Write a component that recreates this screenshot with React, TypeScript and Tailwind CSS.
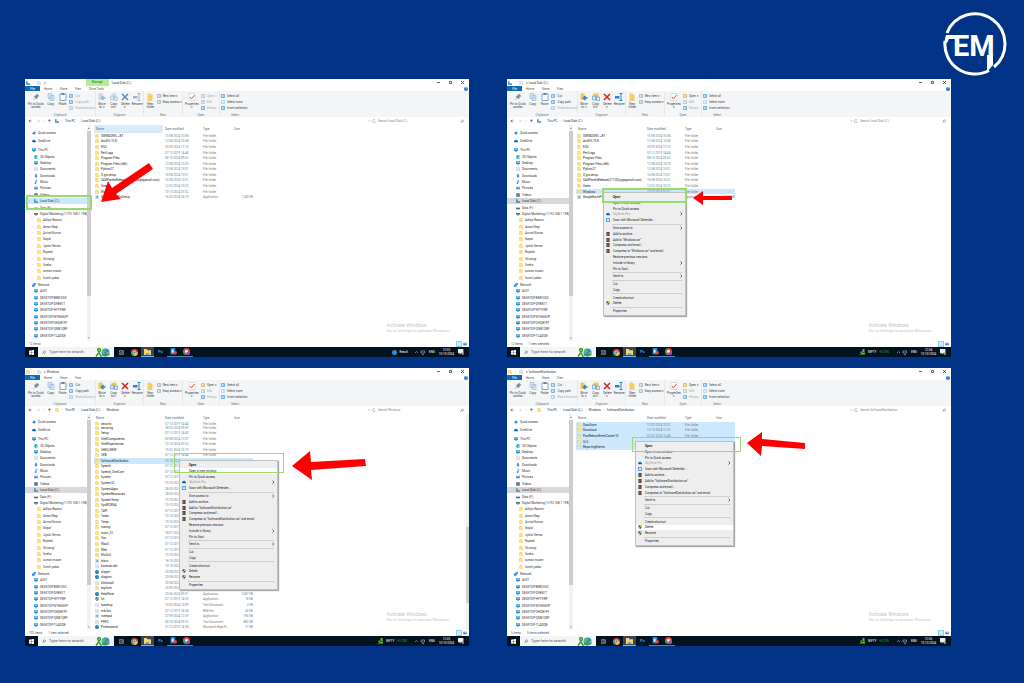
import React from 'react'
import clsx from 'clsx'

type IconKind =
  | 'folder'
  | 'disk'
  | 'disk2'
  | 'pc'
  | 'star'
  | 'cloud'
  | 'cube'
  | 'doc'
  | 'down'
  | 'music'
  | 'picture'
  | 'video'
  | 'netdrive'
  | 'network'
  | 'edge'
  | 'exe'
  | 'rar'
  | 'shield'
  | 'defender'

function Icon({ kind, className = 'size-1' }: { kind: IconKind; className?: string }) {
  return (
    <svg viewBox="0 0 12 12" className={clsx('shrink-0', className)} aria-hidden="true">
      {kind === 'folder' && (
        <>
          <path d="M1 0h6l1 2h3v10H1z" fill="#f7cf5e" />
          <path d="M3 3h8v9H3z" fill="#fde08a" />
        </>
      )}
      {kind === 'disk' && (
        <>
          <path d="M0 7h12v4H0z" fill="#5d6b75" />
          <path d="M0 1h5v5H0z" fill="#1aa0e8" />
          <path d="M8 8h3v2H8z" fill="#4fd3c4" />
        </>
      )}
      {kind === 'disk2' && <path d="M0 5h12v5H0z" fill="#5d6b75" />}
      {kind === 'pc' && (
        <>
          <path d="M0 1h12v8H0z" fill="#2196e3" />
          <path d="M1 2h10v4H1z" fill="#5fc4f5" />
          <path d="M3 10h6v1H3z" fill="#4b6b85" />
        </>
      )}
      {kind === 'star' && <path d="M7 0l1 4 4 1-4 3-1 4-3-3-4-1 3-3z" fill="#1683d8" />}
      {kind === 'cloud' && <path d="M3 10a3 3 0 0 1 0-6 4 4 0 0 1 7 1 2.500 2.500 0 0 1 0 5z" fill="#0a66c9" />}
      {kind === 'cube' && (
        <>
          <path d="M1 2l5-2 5 2v8l-5 2-5-2z" fill="#17a5c9" />
          <path d="M6 5l5-3v8l-5 2z" fill="#7fe0ef" />
        </>
      )}
      {kind === 'doc' && (
        <>
          <path d="M2 .5h6l2.500 2.500v8.500H2z" fill="#fff" stroke="#8896a3" />
          <path d="M4 4h4M4 6h5M4 8h5" stroke="#9fb4c8" />
        </>
      )}
      {kind === 'down' && <path d="M4 0h4v5h3l-5 6-5-6h3z" fill="#1683d8" />}
      {kind === 'music' && <path d="M5 0h2c0 2 4 2 3 6-1-2-2-2-3-2v5a2.500 2.500 0 1 1-2-2z" fill="#1683d8" />}
      {kind === 'picture' && (
        <>
          <path d="M0 2h12v8H0z" fill="#7ab8de" />
          <path d="M1 9l3-4 3 3 2-2 2 3z" fill="#2f6f96" />
        </>
      )}
      {kind === 'video' && (
        <>
          <path d="M1 1h10v10H1z" fill="#4a4f5c" />
          <path d="M4 2h4v8H4z" fill="#8d94a5" />
        </>
      )}
      {kind === 'netdrive' && (
        <>
          <path d="M0 3h12v5H0z" fill="#5d6b75" />
          <path d="M4 5h4v6H4z" fill="#2fa84f" />
        </>
      )}
      {kind === 'network' && (
        <>
          <path d="M4 0h8v6H4z" fill="#38a8ec" />
          <path d="M0 5h8v6H0z" fill="#1683d8" />
        </>
      )}
      {kind === 'edge' && (
        <>
          <circle cx="6" cy="6" r="6" fill="#1278c8" />
          <path d="M1 4a6 6 0 0 1 11 3H6a3 3 0 0 0-5-3z" fill="#35c0a8" />
        </>
      )}
      {kind === 'exe' && (
        <>
          <path d="M.5 1.500h11v9H.5z" fill="#fff" stroke="#7a93a8" />
          <path d="M4 4h5v4H4z" fill="#2a7fd0" />
        </>
      )}
      {kind === 'rar' && (
        <>
          <path d="M1 0h10v4H1z" fill="#9b2d5a" />
          <path d="M1 4h10v4H1z" fill="#34549c" />
          <path d="M1 8h10v4H1z" fill="#39733c" />
          <path d="M5 0h3v12H5z" fill="#6b3a2a" />
        </>
      )}
      {kind === 'shield' && (
        <>
          <path d="M6 0l5 2c0 5-1 8-5 10C2 10 1 7 1 2z" fill="#1e5fae" />
          <path d="M6 0l5 2c0 2 0 3-.5 4H6zM6 6v6C3.500 11 2 9 1.500 6z" fill="#e8c33a" />
        </>
      )}
      {kind === 'defender' && (
        <>
          <path d="M0 0h12v12H0z" fill="#4fa8ea" />
          <path d="M3 4h6v5H3z" fill="#e6f4ff" />
        </>
      )}
    </svg>
  )
}

interface FileRow {
  name: string
  date: string
  type?: string
  size?: string
  icon?: IconKind
  selected?: boolean
}

interface MenuEntry {
  label: string
  icon?: IconKind
  arrow?: boolean
  bold?: boolean
  muted?: boolean
  lit?: boolean
}

interface WindowProps {
  title: string
  path: string[]
  search: string
  files: FileRow[]
  listClass: string
  status: string[]
  ticker: string
  clock: string
  driveTools?: boolean
  driveIcon?: boolean
  scrolls?: boolean
  children?: React.ReactNode
}

const places: [string, IconKind, number][] = [
  ['This PC', 'pc', 0],
  ['3D Objects', 'cube', 1],
  ['Desktop', 'pc', 1],
  ['Documents', 'doc', 1],
  ['Downloads', 'down', 1],
  ['Music', 'music', 1],
  ['Pictures', 'picture', 1],
  ['Videos', 'video', 1],
  ['Local Disk (C:)', 'disk', 1],
  ['Data (F:)', 'disk2', 1],
  ['Digital Marketing (\\\\192.168.1.198)', 'netdrive', 1],
  ['Aditya Rawani', 'folder', 2],
  ['Aman Negi', 'folder', 2],
  ['Arvind Kumar', 'folder', 2],
  ['Gopal', 'folder', 2],
  ['Jyotsi Verma', 'folder', 2],
  ['Rupesh', 'folder', 2],
  ['Shivangi', 'folder', 2],
  ['Sneha', 'folder', 2],
  ['suman maam', 'folder', 2],
  ['Sumit yadav', 'folder', 2],
]

const network: [string, IconKind, number][] = [
  ['Network', 'network', 0],
  ['ASIIT', 'pc', 1],
  ['DESKTOP-BMK3ISO', 'pc', 1],
  ['DESKTOP-D9BN1T', 'pc', 1],
  ['DESKTOP-HYTYRIF', 'pc', 1],
  ['DESKTOP-NTHGGUP', 'pc', 1],
  ['DESKTOP-OHQB1FY', 'pc', 1],
  ['DESKTOP-QM81QRY', 'pc', 1],
  ['DESKTOP-TLADIQE', 'pc', 1],
]

function PlaceItem({ label, icon, level, active, chevrons }: {
  label: string
  icon: IconKind
  level: number
  active?: boolean
  chevrons?: boolean
}) {
  return (
    <button
      className={clsx(
        'flex min-h-0 w-full flex-1 items-center gap-[2px] overflow-hidden whitespace-nowrap text-left',
        level === 0 && 'pl-[2px]',
        level === 1 && 'pl-[4px]',
        level === 2 && 'pl-[7px]',
        active && (chevrons ? 'bg-[#cce8ff]' : 'bg-[#d9d9d9]'),
      )}
    >
      <span className="w-[3px] shrink-0 text-[#777]">{chevrons ? (level === 0 ? '⌄' : '›') : ''}</span>
      <Icon kind={icon} />
      <span>{label}</span>
    </button>
  )
}

function Sidebar({ chevrons }: { chevrons?: boolean }) {
  return (
    <nav className="flex w-[62px] shrink-0 flex-col pt-[5px]">
      <div className="flex h-[6px]">
        <PlaceItem label="Quick access" icon="star" level={0} chevrons={chevrons} />
      </div>
      <div className="mt-[2px] flex h-[6px]">
        <PlaceItem label="OneDrive" icon="cloud" level={0} chevrons={chevrons} />
      </div>
      <div className="mt-[3px] flex h-[134px] flex-col">
        {places.map(([label, icon, level]) => (
          <PlaceItem
            key={label}
            label={label}
            icon={icon}
            level={level}
            active={label === 'Local Disk (C:)'}
            chevrons={chevrons}
          />
        ))}
      </div>
      <div className="mt-px flex h-[57px] flex-col">
        {network.map(([label, icon, level]) => (
          <PlaceItem key={label} label={label} icon={icon} level={level} chevrons={chevrons} />
        ))}
      </div>
    </nav>
  )
}

function BigTool({ label, className, children }: { label: string; className?: string; children: React.ReactNode }) {
  return (
    <button className={clsx('flex w-[12px] flex-col items-center gap-[2px] text-center text-[#444]', className)}>
      <svg viewBox="0 0 16 16" className="size-[8px]" aria-hidden="true">
        {children}
      </svg>
      <span className="whitespace-pre-line leading-[3px]">{label}</span>
    </button>
  )
}

function SmallTool({ label, color, off }: { label: string; color: string; off?: boolean }) {
  return (
    <button className={clsx('flex h-[4px] items-center gap-[2px] whitespace-nowrap', off ? 'text-[#aaa]' : 'text-[#444]')}>
      <svg viewBox="0 0 8 8" className="size-[4px] shrink-0" aria-hidden="true">
        <path d="M1 1h6v6H1z" fill="#fff" stroke={color} strokeWidth="1.500" />
        <path d="M3 4h3" stroke={color} strokeWidth="2" />
      </svg>
      <span>{label}</span>
    </button>
  )
}

function Group({ label, className, children }: { label: string; className: string; children: React.ReactNode }) {
  return (
    <div className={clsx('flex shrink-0 flex-col justify-between border-r border-[#e6e8ea]', className)}>
      <div className="flex items-start pt-[2px]">{children}</div>
      <div className="text-center text-[#777]">{label}</div>
    </div>
  )
}

function Ribbon({ off }: { off?: boolean }) {
  const folder = off ? '#cfd6de' : '#f5c84b'
  const blue = off ? '#9db7cf' : '#2a84d2'
  return (
    <div className="flex h-[26px] bg-[#f3f5f7]">
      <Group label="Clipboard" className="w-[71px]">
        <BigTool label={'Pin to Quick\naccess'} className="ml-[2px] w-[18px]">
          <path d="M10 2l4 4-2 1-2 3-1 2-5-5 2-1 3-2zM6 10l-4 4" fill="#7c8a98" stroke="#7c8a98" />
        </BigTool>
        <BigTool label="Copy">
          <path d="M2 1h8v10H2zM6 5h8v10H6z" fill="#d8e8f6" stroke="#7fa8cf" />
        </BigTool>
        <BigTool label="Paste">
          <path d="M2 2h12v13H2z" fill="#fff" stroke="#7fa8cf" strokeWidth="2" />
          <path d="M5 0h6v4H5z" fill="#6d8299" />
        </BigTool>
        <div className="flex flex-col gap-[2px] pl-px pt-px">
          <SmallTool label="Cut" color="#5b9bd5" off={off} />
          <SmallTool label="Copy path" color="#5b9bd5" off={off} />
          <SmallTool label="Paste shortcut" color="#a9bdd0" off />
        </div>
      </Group>
      <Group label="Organize" className="w-[48px]">
        <BigTool label={'Move\nto ▾'}>
          <path d="M1 1h8v13H1z" fill={folder} />
          <path d="M15 10H8m3-4l-4 4 4 4" fill="none" stroke={blue} strokeWidth="3" />
        </BigTool>
        <BigTool label={'Copy\nto ▾'}>
          <path d="M3 1h10v13H3z" fill={folder} />
          <path d="M1 6h6v8H1zM9 8h6v7H9z" fill="#d8e8f6" stroke={blue} />
        </BigTool>
        <BigTool label={'Delete\n▾'}>
          <path d="M2 2l12 12M14 2L2 14" stroke={off ? '#5f88b5' : '#d92020'} strokeWidth="3" />
        </BigTool>
        <BigTool label="Rename">
          <path d="M0 6h9v5H0z" fill={blue} />
          <path d="M12 1v14M9 1h6M9 15h6" stroke={blue} strokeWidth="2" />
        </BigTool>
      </Group>
      <Group label="New" className="w-[39px]">
        <BigTool label={'New\nfolder'} className="ml-px">
          <path d="M3 1h6l1 2h3v13H3z" fill="#f5cf62" />
        </BigTool>
        <div className="flex flex-col gap-[2px] pl-px pt-px">
          <SmallTool label="New item ▾" color="#9aa9b8" />
          <SmallTool label="Easy access ▾" color="#9aa9b8" />
        </div>
      </Group>
      <Group label="Open" className="w-[37px]">
        <BigTool label={'Properties\n▾'} className="w-[18px]">
          <path d="M2 1h12v14H2z" fill="#fff" stroke="#b8c2cc" />
          <path d="M4 8l3 4 6-8" fill="none" stroke="#e0592a" strokeWidth="2" />
        </BigTool>
        <div className="flex flex-col gap-[2px] pt-px">
          <SmallTool label="Open ▾" color={off ? '#a9bdd0' : '#e3a92b'} off={off} />
          <SmallTool label="Edit" color="#a9bdd0" off />
          <SmallTool label="History" color="#5b9bd5" off />
        </div>
      </Group>
      <Group label="Select" className="w-[30px] border-r-0">
        <div className="flex flex-col gap-[2px] pl-px pt-px">
          <SmallTool label="Select all" color="#3c9be0" />
          <SmallTool label="Select none" color="#a9cbe8" />
          <SmallTool label="Invert selection" color="#3c9be0" />
        </div>
      </Group>
    </div>
  )
}

function Taskbar({ ticker, clock }: { ticker: string; clock: string }) {
  return (
    <footer className="flex h-[10px] items-center bg-[#03121f] text-white">
      <button aria-label="Start" className="flex w-[13px] justify-center">
        <svg viewBox="0 0 8 8" className="size-[5px]">
          <path d="M0 1l3.500-.5v3.300H0zM4 .4L8 0v3.800H4zM0 4.300h3.500v3.300L0 7zM4 4.300h4V8l-4-.5z" fill="#fff" />
        </svg>
      </button>
      <label className="flex h-full w-[76px] items-center bg-[#f4f5f5] pl-[4px]">
        <svg viewBox="0 0 8 8" className="size-[4px] shrink-0">
          <path d="M3 5a2 2 0 1 1 4-2 2 2 0 0 1-4 2zM3 5L1 8" fill="none" stroke="#444" />
        </svg>
        <input
          aria-label="Type here to search"
          placeholder="Type here to search"
          className="ml-[3px] w-[46px] text-[4px] leading-[6px] placeholder:text-[#555]"
        />
        <svg viewBox="0 0 30 18" className="h-[9px] w-[15px] shrink-0">
          <path d="M2 17L10 6c2-3-1-6-3-5s-2 4 0 6l5 10" fill="none" stroke="#3a9a2e" strokeWidth="3" />
          <circle cx="21" cy="9" r="8" fill="#2f8fc8" />
          <path d="M16 3c5-1 7 2 4 4s0 6-3 5-4-7-1-9zM23 9l5-2v6l-4 2z" fill="#6cc04a" />
          <path d="M11 17c5-3 12-2 18-4" fill="none" stroke="#3a9a2e" strokeWidth="2" />
        </svg>
      </label>
      <div className="flex h-full items-center">
        <button aria-label="Task view" className="flex w-[14px] justify-center">
          <svg viewBox="0 0 10 10" className="size-[5px]">
            <path d="M1 1h6v3H1zM1 6h6v3H1zM9 1v8" fill="none" stroke="#c9d2d8" />
          </svg>
        </button>
        <button aria-label="Chrome" className="flex w-[13px] justify-center">
          <svg viewBox="0 0 12 12" className="size-[7px]">
            <circle cx="6" cy="6" r="6" fill="#e94435" />
            <path d="M6 6L1 3a6 6 0 0 0 4 9z" fill="#34a853" />
            <path d="M6 6h6a6 6 0 0 1-7 6z" fill="#fbbc05" />
            <circle cx="6" cy="6" r="2.500" fill="#4285f4" stroke="#fff" />
          </svg>
        </button>
        <button aria-label="File Explorer" className="flex h-full w-[13px] items-center justify-center border-b border-[#76b9ed] bg-[#3b4650]">
          <svg viewBox="0 0 12 10" className="h-[6px] w-[7px]">
            <path d="M0 0h5l1 2h6v8H0z" fill="#f9d667" />
            <path d="M3 7h6v3H3z" fill="#4fa5df" />
          </svg>
        </button>
        <button aria-label="Photoshop" className="w-[13px] text-center text-[4px] font-bold text-[#31a8ff]">
          Ps
        </button>
        <button aria-label="Store" className="flex h-full w-[13px] items-center justify-center border-b border-[#4b86b5]">
          <svg viewBox="0 0 12 12" className="size-[7px]">
            <path d="M1 0h8v11H1z" fill="#2389dd" />
            <circle cx="9" cy="8" r="3" fill="#dd4a43" />
            <path d="M3 3h3v5H3z" fill="#fff" />
          </svg>
        </button>
        <button aria-label="Chrome profile" className="flex h-full w-[13px] items-center justify-center border-b border-[#4b86b5]">
          <svg viewBox="0 0 12 12" className="size-[7px]">
            <circle cx="6" cy="6" r="6" fill="#e94435" />
            <path d="M6 6L1 3a6 6 0 0 0 4 9z" fill="#34a853" />
            <circle cx="6" cy="6" r="2.500" fill="#fff" />
            <circle cx="9" cy="9" r="3" fill="#b044c8" />
          </svg>
        </button>
      </div>
      <div className="ml-auto flex items-center gap-[3px] pr-[5px]">
        {ticker === 'Result' ? (
          <span className="flex items-center gap-[3px] pr-[3px]">
            <span className="size-[5px] rounded-full bg-[#2a8fd6]" />
            Result
          </span>
        ) : (
          <span className="flex items-center gap-[3px]">
            <svg viewBox="0 0 12 12" className="size-[6px]">
              <path d="M0 11h12V7H8zM7 0h4v6H7zM3 5h3v3H3z" fill="#5cc22e" />
            </svg>
            NIFTY
            <span className="pr-[4px] text-[#1faa3c]">{ticker}</span>
          </span>
        )}
        <svg viewBox="0 0 24 10" className="h-[5px] w-[12px]">
          <path d="M2 6l3-3 3 3M14 2h7v4h-7zM16 9h4" fill="none" stroke="#d8dde0" />
        </svg>
        <span>ENG</span>
        <span className="px-px text-center leading-[4px]">
          {clock}
          <br />
          10-10-2024
        </span>
        <svg viewBox="0 0 10 10" className="size-[6px]">
          <path d="M0 0h9v7H5L3 9V7H0z" fill="#e8ecee" />
          <circle cx="8" cy="8" r="2" fill="#8c9499" />
        </svg>
      </div>
    </footer>
  )
}

function ContextMenu({ groups, className }: { groups: MenuEntry[][]; className: string }) {
  return (
    <div
      role="menu"
      className={clsx(
        'absolute flex flex-col border border-[#c0c0c0] bg-[#eeeeee] py-px text-[#1c1c1c] shadow-[1px_1px_1px_#0005]',
        className,
      )}
    >
      {groups.map((group, i) => (
        <React.Fragment key={i}>
          {i > 0 && (
            <div className="flex min-h-0 flex-[2] items-center pl-[8px] pr-[3px]">
              <div className="h-px w-full bg-[#cfcfcf]" />
            </div>
          )}
          {group.map((entry) => (
            <button
              key={entry.label}
              role="menuitem"
              className={clsx(
                'flex min-h-0 flex-[6] items-center whitespace-nowrap px-[2px]',
                entry.bold && 'font-bold',
                entry.muted && 'text-[#999]',
                entry.lit && 'bg-white',
              )}
            >
              <span className="flex w-[7px] shrink-0">{entry.icon && <Icon kind={entry.icon} />}</span>
              <span>{entry.label}</span>
              {entry.arrow && (
                <svg viewBox="0 0 6 8" className="ml-auto h-[4px] w-[3px]" aria-hidden="true">
                  <path d="M1 1l3 3-3 3" fill="none" stroke="#444" strokeWidth="1.500" />
                </svg>
              )}
            </button>
          ))}
        </React.Fragment>
      ))}
    </div>
  )
}

function Highlight({ className }: { className: string }) {
  return <div className={clsx('absolute border-[#98da6c]', className)} />
}

function Arrow({ points }: { points: string }) {
  return (
    <svg viewBox="0 0 444 278" className="pointer-events-none absolute left-0 top-0 h-[278px] w-[444px]" aria-hidden="true">
      <polygon points={points} fill="#fe0000" />
    </svg>
  )
}

function FileTable({ files, listClass, driveTools }: { files: FileRow[]; listClass: string; driveTools?: boolean }) {
  return (
    <table className="block w-[159px]">
      <thead className="block">
        <tr className="grid h-[8px] grid-cols-[71px_38px_31px_19px] items-center text-left text-[#5a6b80]">
          <th className={clsx('self-stretch pl-[2px] pt-[2px] font-normal', driveTools && 'mr-[2px] bg-[#d9ebf9]')}>Name</th>
          <th className="font-normal">Date modified</th>
          <th className="font-normal">Type</th>
          <th className="font-normal">Size</th>
        </tr>
      </thead>
      <tbody className={clsx('flex flex-col', listClass)}>
        {files.map((file) => (
          <tr
            key={file.name}
            className={clsx(
              'grid min-h-0 grow basis-0 grid-cols-[71px_38px_31px_19px] items-center overflow-hidden whitespace-nowrap text-[#7d7d7d]',
              file.selected && 'bg-[#cce8ff]',
            )}
          >
            <td className="flex items-center gap-[2px] pl-px text-[#222]">
              <Icon kind={file.icon ?? 'folder'} />
              {file.name}
            </td>
            <td>{file.date}</td>
            <td>{file.type}</td>
            <td className="text-right">{file.size}</td>
          </tr>
        ))}
      </tbody>
    </table>
  )
}

function ExplorerWindow(props: WindowProps) {
  const { title, path, search, files, listClass, status, ticker, clock, driveTools, driveIcon, scrolls, children } = props
  return (
    <section className="relative flex flex-col bg-white text-[3px] leading-[4px] text-[#333]">
      <header className="flex h-[7px] items-center">
        <div className="flex items-center gap-[3px] pl-px">
          <Icon kind={driveIcon ? 'disk' : 'folder'} />
          <span className="text-[#aaa]">|</span>
          <Icon kind="doc" />
          <span>▾</span>
        </div>
        {driveTools && <div className="ml-[40px] w-[23px] self-stretch bg-[#b5ec94] pt-px text-center text-[#3d6b2c]">Manage</div>}
        <div className={driveTools ? 'ml-[3px]' : 'ml-px'}>{title}</div>
        <div className="ml-auto flex gap-[9px] pr-[5px]">
          <button aria-label="Minimize" className="flex">
            <svg viewBox="0 0 6 6" className="size-[3px]"><path d="M0 3h6" stroke="#333" strokeWidth="1.500" /></svg>
          </button>
          <button aria-label="Restore" className="flex">
            <svg viewBox="0 0 6 6" className="size-[3px]"><path d="M1 1h4v4H1z" fill="none" stroke="#333" strokeWidth="1.500" /></svg>
          </button>
          <button aria-label="Close" className="flex">
            <svg viewBox="0 0 6 6" className="size-[3px]"><path d="M0 0l6 6M6 0L0 6" stroke="#333" strokeWidth="1.500" /></svg>
          </button>
        </div>
      </header>
      <div className="flex h-[5px] items-center text-center text-[#555]">
        <button className="h-full w-[15px] bg-[#1268b8] text-white">File</button>
        <button className="w-[16px]">Home</button>
        <button className="w-[15px]">Share</button>
        <button className="w-[14px]">View</button>
        {driveTools && <button className="w-[23px]">Drive Tools</button>}
        <button aria-label="Help" className="ml-auto mr-px size-[4px] rounded-full bg-[#1a78cf] text-white">
          ?
        </button>
      </div>
      <Ribbon off={driveTools} />
      <div className="flex h-[8px] items-center whitespace-nowrap">
        <svg viewBox="0 0 56 8" className="ml-[3px] h-[4px] w-[25px] shrink-0" aria-hidden="true">
          <path d="M8 4H2m3-3L2 4l3 3M48 7V1m-3 3l3-3 3 3" fill="none" stroke="#555" strokeWidth="1.500" />
          <path d="M20 4h6m-3-3l3 3-3 3M34 3l2 2 2-2" fill="none" stroke="#bbb" />
        </svg>
        <Icon kind={driveIcon ? 'disk' : 'folder'} className="ml-[2px] size-1" />
        <ol className="flex">
          {path.map((part) => (
            <li key={part} className="flex">
              <span className="w-[6px] text-center text-[#888]">›</span>
              {part}
            </li>
          ))}
        </ol>
        <div className="ml-auto flex w-[101px] items-center">
          <svg viewBox="0 0 16 8" className="h-[4px] w-[8px] shrink-0" aria-hidden="true">
            <path d="M1 3l2 2 2-2M14 2a3 3 0 1 0 1 3" fill="none" stroke="#777" />
          </svg>
          <input aria-label={search} placeholder={search} className="ml-[2px] min-w-0 flex-1 text-[3px] leading-[4px] placeholder:text-[#888]" />
          <svg viewBox="0 0 8 8" className="mr-[5px] size-[4px] shrink-0" aria-hidden="true">
            <path d="M3 5a2 2 0 1 1 4-2 2 2 0 0 1-4 2zM3 5L1 8" fill="none" stroke="#666" />
          </svg>
        </div>
      </div>
      <div className="flex h-[216px]">
        <Sidebar chevrons={driveTools} />
        <div className="flex w-[4px] shrink-0 flex-col items-center bg-[#f2f2f2] text-[#666]">
          <span className="h-[6px] leading-[6px]">▴</span>
          <div className="h-[165px] w-full bg-[#cdcdcd]" />
          <span className="mt-auto h-[5px]">▾</span>
        </div>
        <div className="flex min-w-0 flex-1 pl-[3px]">
          <FileTable files={files} listClass={listClass} driveTools={driveTools} />
          <div className="ml-auto flex">
            <div className={clsx('self-end whitespace-nowrap pb-[8px] text-[#c4c4c4]', scrolls ? 'pr-[16px]' : 'pr-[19px]')}>
              <div className="text-[5px] leading-[6px]">Activate Windows</div>
              <div className="text-[4px] leading-[5px]">Go to Settings to activate Windows.</div>
            </div>
            {scrolls && (
              <div className="flex w-[3px] flex-col bg-[#f0f0f0] pt-[113px]">
                <div className="h-[76px] bg-[#cdcdcd]" />
              </div>
            )}
          </div>
        </div>
      </div>
      <div className="flex h-[6px] items-center gap-[6px] pl-[4px] text-[#3d5570]">
        {status.map((text) => (
          <span key={text}>{text}</span>
        ))}
        <div className="ml-auto flex items-center gap-px pr-[2px]">
          <span className="size-[6px] border border-[#8fd0ee] bg-[#cdeaf8]" />
          <Icon kind="picture" className="size-[4px]" />
        </div>
      </div>
      <Taskbar ticker={ticker} clock={clock} />
      {children}
    </section>
  )
}

const folder = (name: string, date: string, selected?: boolean): FileRow => ({ name, date, type: 'File folder', selected })

const driveFiles = (picked: boolean): FileRow[] => [
  folder('$WINDOWS.~BT', '15-08-2024 10:08'),
  folder('ArcGIS 10.8', '12-08-2024 15:08'),
  folder('ESD', '20-09-2024 17:10'),
  folder('PerfLogs', '07-12-2019 14:44'),
  folder('Program Files', '08-10-2024 09:52'),
  folder('Program Files (x86)', '12-08-2024 15:20'),
  folder('Python27', '12-08-2024 15:01'),
  folder('Q gis setup', '16-08-2024 13:01'),
  folder('SAGPanelsRelease(21120)(agegamail.com)', '16-08-2024 15:01'),
  folder('Users', '12-02-2024 10:23'),
  folder('Windows', '10-10-2024 01:02', picked),
  { name: 'GoogleEarthProSetup', date: '16-02-2024 14:10', type: 'Application', size: '1,340 KB', icon: 'exe' },
]

const windowsFiles: FileRow[] = [
  folder('security', '07-12-2019 14:44'),
  folder('servicing', '28-03-2024 09:09'),
  folder('Setup', '07-12-2019 14:49'),
  folder('ShellComponents', '05-08-2024 12:07'),
  folder('ShellExperiences', '10-10-2024 07:53'),
  folder('SHELLNEW', '15-02-2024 15:19'),
  folder('SKB', '07-12-2019 14:44'),
  { name: 'SoftwareDistribution', date: '10-10-2024', selected: true },
  { name: 'Speech', date: '07-12-2019' },
  { name: 'Speech_OneCore', date: '07-12-2019' },
  { name: 'System', date: '07-12-2019' },
  { name: 'System32', date: '10-10-2024' },
  { name: 'SystemApps', date: '28-03-2024' },
  { name: 'SystemResources', date: '28-03-2024' },
  { name: 'SystemTemp', date: '10-10-2024' },
  { name: 'SysWOW64', date: '10-10-2024' },
  { name: 'TAPI', date: '07-12-2019' },
  { name: 'Tasks', date: '10-10-2024' },
  { name: 'Temp', date: '10-10-2024' },
  { name: 'tracing', date: '07-12-2019' },
  { name: 'twain_32', date: '18-01-2024' },
  { name: 'Vss', date: '07-12-2019' },
  { name: 'WaaS', date: '07-12-2019' },
  { name: 'Web', date: '07-12-2019' },
  { name: 'WinSxS', date: '10-10-2024' },
  { name: 'bfsvc', date: '18-10-2024', icon: 'exe' },
  { name: 'bootstat.dat', date: '10-10-2024', icon: 'doc' },
  { name: 'diagerr', date: '20-08-2024', icon: 'edge' },
  { name: 'diagwrn', date: '20-08-2024', icon: 'edge' },
  { name: 'DtcInstall', date: '20-08-2024', icon: 'doc' },
  { name: 'explorer', date: '25-09-2024', icon: 'folder' },
  { name: 'HelpPane', date: '20-06-2024 09:01', type: 'Application', size: '1,047 KB', icon: 'edge' },
  { name: 'hh', date: '07-12-2019 14:39', type: 'Application', size: '18 KB', icon: 'shield' },
  { name: 'lsasetup', date: '15-02-2024 15:09', type: 'Text Document', size: '2 KB', icon: 'doc' },
  { name: 'mib.bin', date: '07-12-2019 14:38', type: 'BIN File', size: '43 KB', icon: 'doc' },
  { name: 'notepad', date: '27-09-2024 12:39', type: 'Application', size: '196 KB', icon: 'exe' },
  { name: 'PFRO', date: '08-10-2024 09:32', type: 'Text Document', size: '883 KB', icon: 'doc' },
  { name: 'Professional', date: '07-12-2019 14:38', type: 'Microsoft Edge H...', size: '31 KB', icon: 'edge' },
]

const distributionFiles: FileRow[] = [
  folder('DataStore', '12-02-2024 10:02', true),
  folder('Download', '10-10-2024 11:03', true),
  folder('PostRebootEventCache.V2', '02-02-2024 16:48', true),
  { name: 'SLS', date: '', selected: true },
  { name: 'ReportingEvents', date: '', icon: 'doc', selected: true },
]

const openGroup = (lit: boolean): MenuEntry[] => [
  { label: 'Open', bold: true },
  { label: 'Open in new window', lit },
  { label: 'Pin to Quick access' },
  { label: 'SkyDrive Pro', icon: 'cloud', arrow: true, muted: true },
  { label: 'Scan with Microsoft Defender...', icon: 'defender' },
]

const archiveGroup = (name: string): MenuEntry[] => [
  { label: 'Add to archive...', icon: 'rar' },
  { label: `Add to "${name}.rar"`, icon: 'rar' },
  { label: 'Compress and email...', icon: 'rar' },
  { label: `Compress to "${name}.rar" and email`, icon: 'rar' },
]

const shareGroup = (name: string): MenuEntry[] => [
  { label: 'Give access to', arrow: true },
  ...archiveGroup(name),
  { label: 'Restore previous versions' },
  { label: 'Include in library', arrow: true },
  { label: 'Pin to Start' },
]

const sendGroup: MenuEntry[] = [{ label: 'Send to', arrow: true }]
const clipGroup: MenuEntry[] = [{ label: 'Cut' }, { label: 'Copy' }]
const propsGroup: MenuEntry[] = [{ label: 'Properties' }]

function Logo() {
  return (
    <svg viewBox="0 0 66 66" className="size-[66px]" role="img" aria-label="EM">
      <path d="M5 22A30 30 0 1 1 52 56M3 30A30 30 0 0 0 47 59.500" fill="none" stroke="#fff" strokeWidth="3" />
      <path d="M4 24h11v4H7l-2 4H2z" fill="#fff" />
      <text x="11" y="45" fontSize="29" fontWeight="700" fill="#fff" fontFamily="Roboto, sans-serif">
        EM
      </text>
      <path d="M45 44h6v10l-6 7z" fill="#fff" />
    </svg>
  )
}

export default function App() {
  return (
    <main className="min-h-screen bg-[#003286] font-['Roboto',sans-serif]">
      <div className="flex h-[79px] justify-end pr-[16px] pt-[11px]">
        <Logo />
      </div>
      <div className="grid grid-cols-2 gap-x-[38px] gap-y-[11px] pb-[37px] pl-[25px] pr-[73px]">
        <ExplorerWindow
          title="Local Disk (C:)"
          path={['This PC', 'Local Disk (C:)']}
          search="Search Local Disk (C:)"
          files={driveFiles(false)}
          listClass="h-[67px]"
          status={['12 items']}
          ticker="Result"
          clock="12:03"
          driveTools
          driveIcon
        >
          <Highlight className="left-[1px] top-[116px] h-[15px] w-[66px] border-2" />
          <Arrow points="124,84 128,90 91,115 96,120 76,123 83,102 87,109" />
        </ExplorerWindow>
        <ExplorerWindow
          title="Local Disk (C:)"
          path={['This PC', 'Local Disk (C:)']}
          search="Search Local Disk (C:)"
          files={driveFiles(true)}
          listClass="h-[67px]"
          status={['12 items', '1 item selected']}
          ticker="+0.26%"
          clock="12:04"
          driveIcon
        >
          <ContextMenu
            className="left-[96px] top-[113px] h-[124px] w-[83px]"
            groups={[
              openGroup(false),
              shareGroup('Windows'),
              sendGroup,
              clipGroup,
              [{ label: 'Create shortcut' }, { label: 'Delete', icon: 'shield' }],
              propsGroup,
            ]}
          />
          <Highlight className="left-[95px] top-[109px] h-[15px] w-[85px] border-2" />
          <Arrow points="186,119 196,112 196,117 225,117 225,121 196,121 196,126" />
        </ExplorerWindow>
        <ExplorerWindow
          title="Windows"
          path={['This PC', 'Local Disk (C:)', 'Windows']}
          search="Search Windows"
          files={windowsFiles}
          listClass="h-[208px] *:first:grow-[0.5] *:first:items-end"
          status={['102 items', '1 item selected']}
          ticker="+0.25%"
          clock="12:05"
          scrolls
        >
          <ContextMenu
            className="left-[154px] top-[92px] h-[130px] w-[99px]"
            groups={[
              openGroup(true),
              shareGroup('SoftwareDistribution'),
              sendGroup,
              clipGroup,
              [{ label: 'Create shortcut' }, { label: 'Delete', icon: 'shield' }, { label: 'Rename', icon: 'shield' }],
              propsGroup,
            ]}
          />
          <Highlight className="left-[149px] top-[85px] h-[20px] w-[110px] border" />
          <Arrow points="267,98 285,83 286,94 340,91 341,98 286,102 287,112" />
        </ExplorerWindow>
        <ExplorerWindow
          title="SoftwareDistribution"
          path={['This PC', 'Local Disk (C:)', 'Windows', 'SoftwareDistribution']}
          search="Search SoftwareDistribution"
          files={distributionFiles}
          listClass="h-[28px]"
          status={['5 items', '5 items selected']}
          ticker="+0.25%"
          clock="12:06"
        >
          <ContextMenu
            className="left-[128px] top-[73px] h-[105px] w-[99px]"
            groups={[
              [...openGroup(false), ...archiveGroup('SoftwareDistribution')],
              sendGroup,
              clipGroup,
              [
                { label: 'Create shortcut' },
                { label: 'Delete', icon: 'shield', lit: true },
                { label: 'Rename', icon: 'shield' },
              ],
              propsGroup,
            ]}
          />
          <Highlight className="left-[125px] top-[69px] h-[15px] w-[109px] border" />
          <Arrow points="240,75 255,64 255,71 298,75 298,81 255,78 254,88" />
        </ExplorerWindow>
      </div>
    </main>
  )
}
